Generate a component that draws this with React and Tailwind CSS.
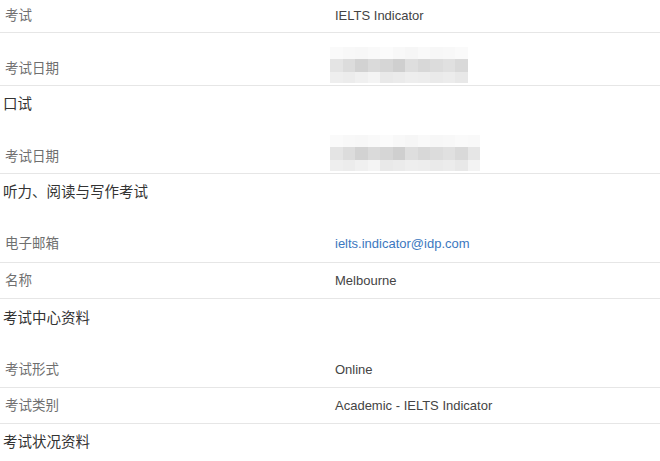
import React from "react";

const font = { fontFamily: '"Liberation Sans", "Noto Sans CJK SC", sans-serif' };

const darkBand = [
  "bg-[#e4e4e4]", "bg-[#dcdcdc]", "bg-[#d2d2d2]", "bg-[#dadada]", "bg-[#d6d6d6]", "bg-[#cfcfcf]",
  "bg-[#dedede]", "bg-[#d8d8d8]", "bg-[#dcdcdc]", "bg-[#e0e0e0]", "bg-[#d9d9d9]", "bg-[#e6e6e6]",
];
const lightBand = [
  "bg-[#eeeeee]", "bg-[#ececec]", "bg-[#f0f0f0]", "bg-[#f4f4f4]", "bg-[#e9e9e9]", "bg-[#ebebeb]",
  "bg-[#eeeeee]", "bg-[#ededed]", "bg-[#eaeaea]", "bg-[#ececec]", "bg-[#e8e8e8]", "bg-[#f3f3f3]",
];
const faintBand = [
  "bg-[#fafafa]", "bg-[#f8f8f8]", "bg-[#f7f7f7]", "bg-[#f9f9f9]", "bg-[#fbfbfb]", "bg-[#f8f8f8]",
  "bg-[#f6f6f6]", "bg-[#f9f9f9]", "bg-[#f7f7f7]", "bg-[#f8f8f8]", "bg-[#fafafa]", "bg-[#f9f9f9]",
];

function Blurred({ cols }) {
  return (
    <div className="flex flex-col">
      <div className="flex h-[12px]">
        {faintBand.slice(0, cols).map((c, i) => (
          <div key={i} className={`w-[12.5px] ${c}`} />
        ))}
      </div>
      <div className="flex h-[13px]">
        {darkBand.slice(0, cols).map((c, i) => (
          <div key={i} className={`w-[12.5px] ${c}`} />
        ))}
      </div>
      <div className="flex h-[11px]">
        {lightBand.slice(0, cols).map((c, i) => (
          <div key={i} className={`w-[12.5px] ${c}`} />
        ))}
      </div>
    </div>
  );
}

function Row({ label, children, className = "" }) {
  return (
    <div className={`flex border-b border-[#e6e6e6] ${className}`}>
      <div className="w-[330px] shrink-0 pl-[5px] text-[13.5px] leading-[18px] text-[#6f6f6f]">
        {label}
      </div>
      <div className="pl-[5px] text-[13px] leading-[18px] text-[#444]">{children}</div>
    </div>
  );
}

function Heading({ children, className = "" }) {
  return (
    <div className={`pl-[3px] text-[14.5px] leading-[18px] text-[#333] ${className}`}>{children}</div>
  );
}

export default function App() {
  return (
    <div className="h-[461px] w-[660px] overflow-hidden bg-white" style={font}>
      <Row label="考试" className="h-[33px] items-center">
        IELTS Indicator
      </Row>
      <div className="flex h-[53px] border-b border-[#e6e6e6]">
        <div className="w-[330px] shrink-0 self-end pb-[7px] pl-[5px] text-[13.5px] leading-[18px] text-[#6f6f6f]">
          考试日期
        </div>
        <div className="pt-[14px]">
          <Blurred cols={11} />
        </div>
      </div>
      <Heading className="h-[40px] pt-[9px]">口试</Heading>
      <div className="flex h-[48px] border-b border-[#e6e6e6]">
        <div className="w-[330px] shrink-0 self-end pb-[7px] pl-[5px] text-[13.5px] leading-[18px] text-[#6f6f6f]">
          考试日期
        </div>
        <div className="pt-[9px]">
          <Blurred cols={12} />
        </div>
      </div>
      <Heading className="h-[51px] pt-[9px]">听力、阅读与写作考试</Heading>
      <Row label="电子邮箱" className="h-[38px] items-center">
        <span className="text-[#3c78c0]">ielts.indicator@idp.com</span>
      </Row>
      <Row label="名称" className="h-[36px] items-center">
        Melbourne
      </Row>
      <Heading className="h-[53px] pt-[10px]">考试中心资料</Heading>
      <Row label="考试形式" className="h-[36px] items-center">
        Online
      </Row>
      <Row label="考试类别" className="h-[36px] items-center">
        Academic - IELTS Indicator
      </Row>
      <Heading className="pt-[9px]">考试状况资料</Heading>
    </div>
  );
}
